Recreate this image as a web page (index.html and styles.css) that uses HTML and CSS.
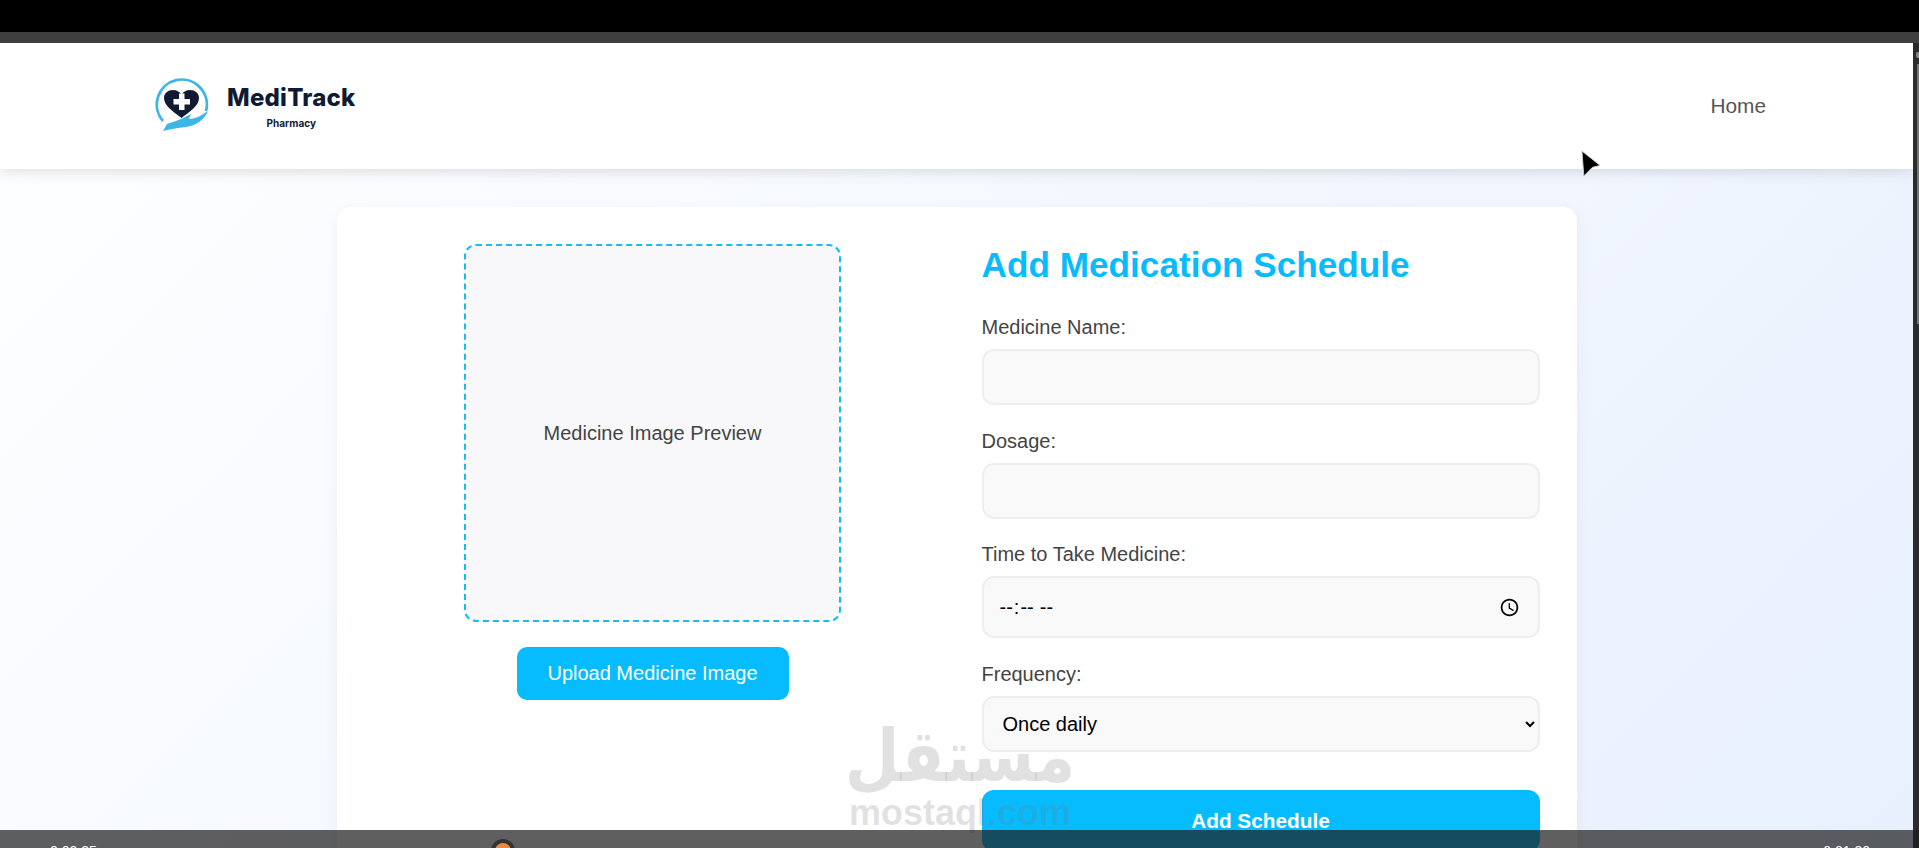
FILE: index.html
```html
<!DOCTYPE html>
<html lang="en">
<head>
<meta charset="utf-8">
<title>MediTrack Pharmacy</title>
<link rel="stylesheet" href="styles.css">
</head>
<body>
<div class="topbar"></div>
<div class="greybar"></div>
<div class="frame">
  <div class="page">
    <header class="header">
      <div class="logo">
        <svg class="logo-mark" viewBox="0 0 54 54" aria-hidden="true">
          <path d="M8 44A25 25 0 1 1 51 34" fill="none" stroke="#3db5e6" stroke-width="2.800"/>
          <path d="M26.500 41C18 34.500 9 28.500 9 21 9 16 13 13 18 13c3.500 0 6.500 1.500 8.500 4.500C28.500 14.500 31.500 13 35 13c5 0 9 3 9 8 0 7.500-9 13.500-17.500 20Z" fill="#101a33"/>
          <path d="M24 16.500h5.500V22H35v5.500h-5.500V33H24v-5.500h-5.500V22H24Z" fill="#fff"/>
          <path d="M8 54l4-7c5-2 10-3 14-5l10-5-2 5c6 0 12-3 19-8-3 8-12 15-22 16-9 1-16 2-23 4Z" fill="#3db5e6"/>
        </svg>
        <div class="brand">
          <span class="brand-name">MediTrack</span>
          <span class="brand-sub">Pharmacy</span>
        </div>
      </div>
      <nav class="nav"><a class="nav-link" href="#">Home</a></nav>
    </header>
    <main class="main">
      <section class="card">
        <div class="left">
          <div class="preview">Medicine Image Preview</div>
          <button class="upload" type="button">Upload Medicine Image</button>
        </div>
        <form class="right">
          <h1 class="title">Add Medication Schedule</h1>
          <label class="label" for="name">Medicine Name:</label>
          <input class="field" id="name" type="text">
          <label class="label" for="dose">Dosage:</label>
          <input class="field" id="dose" type="text">
          <label class="label" for="time">Time to Take Medicine:</label>
          <input class="field field-time" id="time" type="time">
          <label class="label" for="freq">Frequency:</label>
          <select class="field" id="freq"><option>Once daily</option></select>
          <button class="submit" type="button">Add Schedule</button>
        </form>
      </section>
    </main>
  </div>
  <div class="scrollbar"><span class="scroll-arrow"></span><span class="scroll-thumb"></span></div>
</div>
<div class="watermark" lang="ar">
  <span class="wm-ar">مستقل</span>
  <span class="wm-en">mostaql.com</span>
</div>
<div class="player">
  <span class="time time-l">0:00:35</span>
  <span class="avatar"></span>
  <span class="time time-r">0:01:30</span>
</div>
<svg class="cursor" viewBox="0 0 24 30" aria-hidden="true"><path d="M2 2l19 15-8 2-9 9Z" fill="#000" stroke="#ccc" stroke-width="1"/></svg>
</body>
</html>
```
FILE: styles.css
```css
* { box-sizing: border-box; }
html, body { margin: 0; height: 848px; overflow: hidden; }
body { display: flex; flex-direction: column; background: #3f3f3f; font-family: "Liberation Sans", Arial, sans-serif; color: #444; position: relative; }
.topbar { height: 32px; background: #000; flex: none; }
.greybar { height: 11px; background: #3f3f3f; flex: none; }
.frame { flex: 1; display: flex; min-height: 0; }
.page { width: 1913px; flex: none; background: linear-gradient(135deg, #ffffff 0%, #e8f0fe 100%); overflow: hidden; }
.scrollbar { flex: 1; background: #2b2b2b; padding-top: 9px; display: flex; flex-direction: column; align-items: flex-end; gap: 6px; }
.scroll-arrow { width: 3px; height: 6px; background: #888; border-radius: 2px 0 0 2px; }
.scroll-thumb { width: 2px; height: 260px; background: #777; }
.header { height: 126px; background: #fff; box-shadow: 0 2px 14px rgba(0,0,0,.14); display: flex; align-items: center; justify-content: space-between; padding: 0 147px 0 155px; position: relative; }
.logo { display: flex; align-items: center; gap: 18px; }
.logo-mark { width: 54px; height: 54px; display: block; margin-top: -4px; }
.brand { display: flex; flex-direction: column; align-items: center; margin-top: 1px; }
.brand-name { font-family: Inter, sans-serif; font-weight: 800; font-size: 24px; line-height: 30px; letter-spacing: .25px; color: #101a33; }
.brand-sub { font-family: Inter, sans-serif; font-weight: 700; font-size: 10px; line-height: 14px; margin-top: 3px; color: #101a33; }
.nav-link { font-size: 20.8px; color: #555; text-decoration: none; }
.main { display: flex; justify-content: center; padding-top: 38px; }
.card { width: 1240px; height: 760px; background: #fff; border-radius: 14px; box-shadow: 0 4px 16px rgba(0,0,0,.05); display: flex; padding: 37px 37px 0 0; }
.left { width: 645px; flex: none; display: flex; flex-direction: column; align-items: center; gap: 25px; padding-right: 13px; }
.preview { width: 377px; height: 378px; background: #f8f8fa; border: 2px dashed #12bdf5; border-radius: 12px; display: flex; align-items: center; justify-content: center; font-size: 20px; color: #444; }
.upload { width: 272px; height: 53px; background: #06bcff; color: #fff; border: 0; border-radius: 10px; font: 20px "Liberation Sans", Arial, sans-serif; }
.right { flex: 1; display: flex; flex-direction: column; }
.title { margin: 0 0 31px; font-size: 35.2px; line-height: 41px; font-weight: 700; color: #06bcff; }
.label { font-size: 20px; line-height: 23px; color: #444; margin-bottom: 10px; }
.field { width: 100%; height: 56px; background: #f9f9fa; border: 2px solid #eeeef2; border-radius: 12px; padding: 0 15px; margin-bottom: 24.5px; font: 20px "Liberation Sans", Arial, sans-serif; color: #000; outline: 0; }
.field-time { height: 62px; margin-bottom: 25px; }
.submit { height: 62px; margin-top: 13px; flex: none; background: #06bcff; color: #fff; border: 0; border-radius: 12px; font: 700 20.8px "Liberation Sans", Arial, sans-serif; }
.watermark { position: absolute; left: 848px; top: 716px; width: 224px; display: flex; flex-direction: column; align-items: center; color: rgba(120,120,125,.22); pointer-events: none; }
.wm-ar { font-family: "DejaVu Sans", sans-serif; font-weight: 700; font-size: 63px; line-height: 80px; transform: scaleY(1.15); transform-origin: 50% 40%; }
.wm-en { font-family: "Liberation Sans", sans-serif; font-weight: 700; font-size: 36px; line-height: 34px; }
.player { position: absolute; left: 0; right: 0; bottom: 0; height: 18px; background: rgba(30,30,30,.71); overflow: hidden; }
.time { position: absolute; top: 13px; font-size: 14px; line-height: 16px; color: #fff; }
.time-l { left: 50px; }
.time-r { right: 49px; }
.avatar { position: absolute; left: 491px; top: 9px; width: 24px; height: 24px; border-radius: 50%; background: #e98b46; border: 4px solid #333; }
.cursor { position: absolute; left: 1580px; top: 149px; width: 23px; height: 29px; }
```
